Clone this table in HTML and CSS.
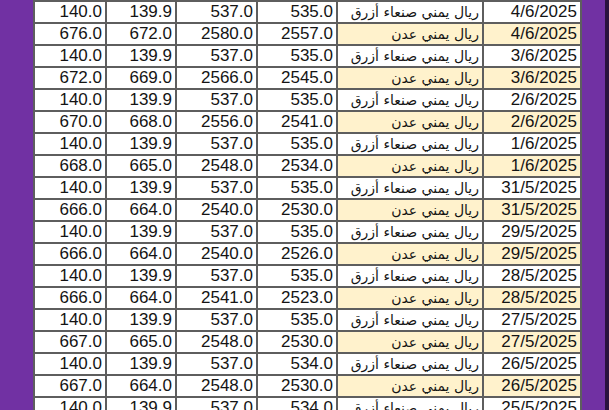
FILE: index.html
```html
<!DOCTYPE html>
<html lang="ar">
<head>
<meta charset="utf-8">
<title>أسعار الصرف</title>
<link rel="stylesheet" href="styles.css">
</head>
<body dir="ltr">
<div class="frame">
  <div class="sheet">
    <div class="c n">140.0</div><div class="c n">139.9</div><div class="c n">537.0</div><div class="c n">535.0</div><div class="c ar" dir="rtl">ريال يمني صنعاء أزرق</div><div class="c n">4/6/2025</div>
    <div class="c n">676.0</div><div class="c n">672.0</div><div class="c n">2580.0</div><div class="c n">2557.0</div><div class="c ar hl" dir="rtl">ريال يمني عدن</div><div class="c n hl">4/6/2025</div>
    <div class="c n">140.0</div><div class="c n">139.9</div><div class="c n">537.0</div><div class="c n">535.0</div><div class="c ar" dir="rtl">ريال يمني صنعاء أزرق</div><div class="c n">3/6/2025</div>
    <div class="c n">672.0</div><div class="c n">669.0</div><div class="c n">2566.0</div><div class="c n">2545.0</div><div class="c ar hl" dir="rtl">ريال يمني عدن</div><div class="c n hl">3/6/2025</div>
    <div class="c n">140.0</div><div class="c n">139.9</div><div class="c n">537.0</div><div class="c n">535.0</div><div class="c ar" dir="rtl">ريال يمني صنعاء أزرق</div><div class="c n">2/6/2025</div>
    <div class="c n">670.0</div><div class="c n">668.0</div><div class="c n">2556.0</div><div class="c n">2541.0</div><div class="c ar hl" dir="rtl">ريال يمني عدن</div><div class="c n hl">2/6/2025</div>
    <div class="c n">140.0</div><div class="c n">139.9</div><div class="c n">537.0</div><div class="c n">535.0</div><div class="c ar" dir="rtl">ريال يمني صنعاء أزرق</div><div class="c n">1/6/2025</div>
    <div class="c n">668.0</div><div class="c n">665.0</div><div class="c n">2548.0</div><div class="c n">2534.0</div><div class="c ar hl" dir="rtl">ريال يمني عدن</div><div class="c n hl">1/6/2025</div>
    <div class="c n">140.0</div><div class="c n">139.9</div><div class="c n">537.0</div><div class="c n">535.0</div><div class="c ar" dir="rtl">ريال يمني صنعاء أزرق</div><div class="c n">31/5/2025</div>
    <div class="c n">666.0</div><div class="c n">664.0</div><div class="c n">2540.0</div><div class="c n">2530.0</div><div class="c ar hl" dir="rtl">ريال يمني عدن</div><div class="c n hl">31/5/2025</div>
    <div class="c n">140.0</div><div class="c n">139.9</div><div class="c n">537.0</div><div class="c n">535.0</div><div class="c ar" dir="rtl">ريال يمني صنعاء أزرق</div><div class="c n">29/5/2025</div>
    <div class="c n">666.0</div><div class="c n">664.0</div><div class="c n">2540.0</div><div class="c n">2526.0</div><div class="c ar hl" dir="rtl">ريال يمني عدن</div><div class="c n hl">29/5/2025</div>
    <div class="c n">140.0</div><div class="c n">139.9</div><div class="c n">537.0</div><div class="c n">535.0</div><div class="c ar" dir="rtl">ريال يمني صنعاء أزرق</div><div class="c n">28/5/2025</div>
    <div class="c n">666.0</div><div class="c n">664.0</div><div class="c n">2541.0</div><div class="c n">2523.0</div><div class="c ar hl" dir="rtl">ريال يمني عدن</div><div class="c n hl">28/5/2025</div>
    <div class="c n">140.0</div><div class="c n">139.9</div><div class="c n">537.0</div><div class="c n">535.0</div><div class="c ar" dir="rtl">ريال يمني صنعاء أزرق</div><div class="c n">27/5/2025</div>
    <div class="c n">667.0</div><div class="c n">665.0</div><div class="c n">2548.0</div><div class="c n">2530.0</div><div class="c ar hl" dir="rtl">ريال يمني عدن</div><div class="c n hl">27/5/2025</div>
    <div class="c n">140.0</div><div class="c n">139.9</div><div class="c n">537.0</div><div class="c n">534.0</div><div class="c ar" dir="rtl">ريال يمني صنعاء أزرق</div><div class="c n">26/5/2025</div>
    <div class="c n">667.0</div><div class="c n">664.0</div><div class="c n">2548.0</div><div class="c n">2530.0</div><div class="c ar hl" dir="rtl">ريال يمني عدن</div><div class="c n hl">26/5/2025</div>
    <div class="c n">140.0</div><div class="c n">139.9</div><div class="c n">537.0</div><div class="c n">534.0</div><div class="c ar" dir="rtl">ريال يمني صنعاء أزرق</div><div class="c n">25/5/2025</div>
  </div>
  <div class="edge"></div>
</div>
</body>
</html>
```
FILE: styles.css
```css
html, body {
  margin: 0;
  padding: 0;
  width: 609px;
  height: 410px;
  overflow: hidden;
  background: #7131a3;
}

.frame {
  display: flex;
  height: 410px;
  padding-left: 33px;
  box-sizing: border-box;
  overflow: hidden;
}

.sheet {
  display: grid;
  grid-template-columns: 72px 70px 81px 80px 146px 98px;
  grid-auto-rows: 22px;
  width: 549px;
  box-sizing: border-box;
  border-left: 2px solid #5e5e5e;
  border-top: 2px solid #5e5e5e;
  background: #ffffff;
  align-self: flex-start;
  font-family: "Liberation Sans", Arial, sans-serif;
  font-size: 17px;
  color: #141414;
}

.c {
  box-sizing: border-box;
  border-right: 2px solid #5e5e5e;
  border-bottom: 2px solid #5e5e5e;
  line-height: 20px;
  padding: 0 3px;
  white-space: nowrap;
  overflow: hidden;
  text-align: right;
  background: #ffffff;
}

.ar {
  font-family: "DejaVu Sans", sans-serif;
  font-size: 14px;
  text-align: right;
  padding: 0 3px;
}

.hl {
  background: #fff2cc;
}

.edge {
  margin-left: auto;
  width: 4px;
  height: 410px;
  background: #2b1240;
}
```
